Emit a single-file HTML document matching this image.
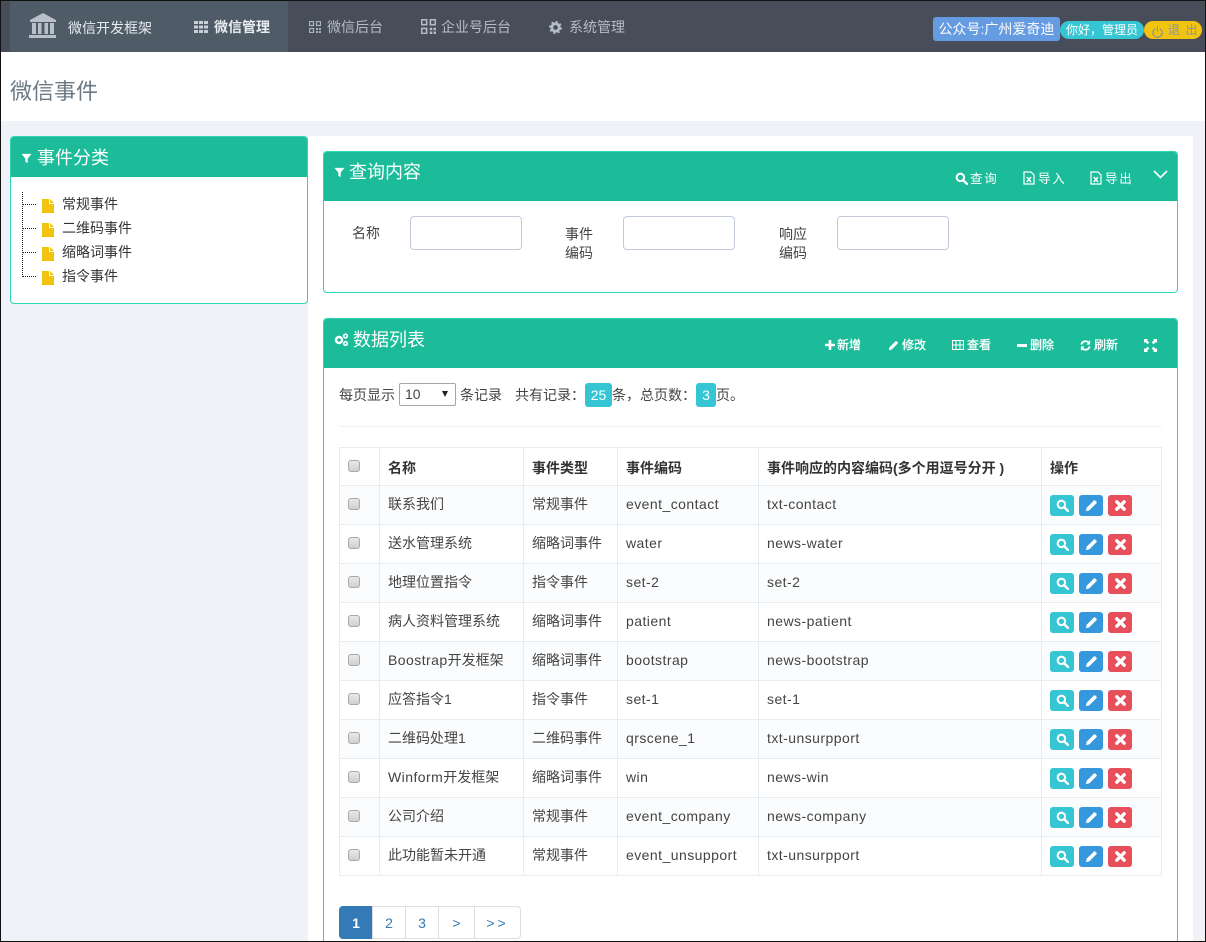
<!DOCTYPE html>
<html lang="zh"><head><meta charset="utf-8"><title>微信事件</title>
<style>
*{box-sizing:border-box}
html,body{margin:0;padding:0;width:1206px;height:942px;overflow:hidden;background:#eff3f8}
body{position:relative;font:14px "Liberation Sans","Noto Sans CJK SC",sans-serif;color:#333}
.a{position:absolute;white-space:nowrap}
.nav{color:#b4bcc8;line-height:20px;top:17px}
.wt{color:#fff}
.tb{color:#fff;font-size:12px;line-height:16px}
.bd{-webkit-text-stroke:.3px #fff}
.panel{position:absolute;background:#fff;border:1px solid #2dd5b0;border-radius:4px;overflow:hidden}
.ph{position:absolute;left:-1px;right:-1px;top:-1px;background:#1cbc9b;border-radius:4px 4px 0 0}
table{position:absolute;left:339px;top:447px;width:822px;border-collapse:collapse;table-layout:fixed;font-size:14px;color:#444}
td,th{border:1px solid #e7ecf1;padding:0 0 2px 8px;text-align:left;white-space:nowrap;height:39px;letter-spacing:.45px}
td:nth-child(2),td:nth-child(3){letter-spacing:0}
td span.l{letter-spacing:.45px}
th{height:38px;font-weight:700;color:#333;letter-spacing:0;padding:2px 0 0 8px}
th .cb{position:relative;top:-2px}
tbody tr:nth-child(odd){background:#fbfcfd}
.cb{display:block;width:12px;height:12px;border:1px solid #a9a9a9;border-radius:3px;background:linear-gradient(#e8e8e8,#d0d0d0)}
.bt{display:inline-block;width:24px;height:21px;border-radius:3px;margin-right:5px;vertical-align:middle;position:relative;top:1px}
.bt svg{display:block;margin:4px auto 0}
.c{background:#36c6d3}.b{background:#3598dc}.r{background:#e7505a}
.pg{position:absolute;top:906px;height:33px;line-height:33px;text-align:center;color:#337ab7;border:1px solid #ddd;margin-left:-1px;background:#fff;font-size:14px}
.tree{color:#333}
input{position:absolute;border:1px solid #c2cad8;border-radius:4px;background:#fff;height:34px;width:112px;top:216px;margin:0;padding:0}
</style></head><body>
<svg width="0" height="0" style="position:absolute"><defs>
<symbol id="s" viewBox="0 0 14 14"><circle cx="5.8" cy="5.8" r="4" fill="none" stroke="#fff" stroke-width="2.2"/><path d="M8.8 8.8L13 13" stroke="#fff" stroke-width="2.6" stroke-linecap="round"/></symbol>
<symbol id="p" viewBox="0 0 14 14"><path d="M1 13l.8-3.6L9.6 1.6a1 1 0 0 1 1.4 0l1.4 1.4a1 1 0 0 1 0 1.4L4.6 12.2z" fill="#fff"/></symbol>
<symbol id="x" viewBox="0 0 14 14"><path d="M3 3L11 11M11 3L3 11" stroke="#fff" stroke-width="3.6" stroke-linecap="round"/></symbol>
<symbol id="f" viewBox="0 0 12 14"><path d="M0 0H7V5H12V14H0z" fill="#f1c40f"/><path d="M8 0L12 4H8z" fill="#f1c40f"/></symbol>
<symbol id="fl" viewBox="0 0 12 12"><path d="M.5 1H11.500L7.300 6V11L4.700 9.500V6z" fill="#fff"/></symbol>
<symbol id="xl" viewBox="0 0 12 14"><path d="M1 1H8L11 4V13H1z" fill="none" stroke="#fff" stroke-width="1.200"/><path d="M3.800 6L8 11M8 6L3.800 11" stroke="#fff" stroke-width="1.400"/></symbol>
<symbol id="qr" viewBox="0 0 12 12"><path d="M.5.500H4.500V4.500H.5zM7.500.5H11.500V4.500H7.500zM.5 7.500H4.500V11.500H.5z" fill="none" stroke="currentColor" stroke-width="1.300"/><path d="M7 7H9V9H7zM10 7H12V9H10zM7 10H9V12H7zM10 10H12V12H10z" fill="currentColor"/></symbol>
</defs></svg>

<!-- top nav -->
<div class="a" style="left:0;top:0;width:1206px;height:52px;background:#474d59"></div>
<div class="a" style="left:10px;top:1px;width:164px;height:52px;background:#4f5b66"></div>
<div class="a" style="left:174px;top:1px;width:114px;height:51px;background:#4f5b66"></div>
<svg class="a" style="left:28px;top:13px" width="30" height="26" viewBox="0 0 30 26"><path d="M15 0L28 7V9H2V7z" fill="#b9c0ca"/><path d="M4 10H8V21H4zM10 10H13.500V21H10zM16.500 10H20V21H16.500zM22 10H26V21H22z" fill="#b9c0ca"/><path d="M2 22H28V25H1V22z" fill="#b9c0ca"/></svg>
<div class="a nav" style="left:68px;top:18px;color:#e8edf2">微信开发框架</div>
<svg class="a" style="left:194px;top:21px" width="14" height="12" viewBox="0 0 14 12"><path d="M0 0H4V3H0zM5 0H9V3H5zM10 0H14V3H10zM0 4.500H4V7.500H0zM5 4.500H9V7.500H5zM10 4.500H14V7.500H10zM0 9H4V12H0zM5 9H9V12H5zM10 9H14V12H10z" fill="#c9d0d8"/></svg>
<div class="a nav" style="left:214px;color:#e8edf2;font-weight:700">微信管理</div>
<svg class="a" style="left:309px;top:21px;color:#a5b3c4" width="12" height="12"><use href="#qr"/></svg>
<div class="a nav" style="left:327px">微信后台</div>
<svg class="a" style="left:421px;top:19px;color:#b4bcc8" width="15" height="15" viewBox="0 0 12 12"><use href="#qr"/></svg>
<div class="a nav" style="left:441px">企业号后台</div>
<svg class="a" style="left:549px;top:21px" width="13" height="13" viewBox="0 0 14 14"><circle cx="7" cy="7" r="4" fill="none" stroke="#b4bcc8" stroke-width="3"/><circle cx="7" cy="7" r="6" fill="none" stroke="#b4bcc8" stroke-width="2" stroke-dasharray="2.300 2.400"/></svg>
<div class="a nav" style="left:569px">系统管理</div>
<div class="a" style="left:933px;top:17px;width:127px;height:24px;background:#659be0;border-radius:3px;color:#fff;font-size:14px;line-height:24px;text-align:center">公众号:广州爱奇迪</div>
<div class="a" style="left:1060px;top:21px;width:84px;height:18px;background:#36c6d3;border-radius:9px;color:#fff;font-size:12px;line-height:18px;text-align:center">你好，管理员</div>
<div class="a" style="left:1144px;top:21px;width:58px;height:18px;background:#f1c40f;border-radius:9px;color:#8c93a0;font-size:12px;line-height:19px;padding-left:24px;letter-spacing:1px">退 出</div>
<svg class="a" style="left:1152px;top:26px" width="11" height="12" viewBox="0 0 12 13"><path d="M3.500 3A5 5 0 1 0 8.500 3M6 .5V6" fill="none" stroke="#7f8fa3" stroke-width="1.200"/></svg>

<!-- page head -->
<div class="a" style="left:0;top:52px;width:1206px;height:69px;background:#fff"></div>
<div class="a" style="left:10px;top:76px;font-size:22px;line-height:32px;color:#6c7a84">微信事件</div>

<!-- content bg -->
<div class="a" style="left:308px;top:136px;width:885px;height:806px;background:#fff"></div>

<!-- left panel -->
<div class="panel" style="left:10px;top:136px;width:298px;height:168px"><div class="ph" style="height:41px"></div></div>
<svg class="a" style="left:21px;top:153px" width="11" height="11"><use href="#fl"/></svg>
<div class="a wt" style="left:37px;top:146px;font-size:18px;line-height:24px">事件分类</div>
<div class="a" style="left:22px;top:192px;height:85px;border-left:1px dotted #222"></div>
<div class="a" style="left:23px;top:204px;width:13px;border-top:1px dotted #222"></div>
<div class="a" style="left:23px;top:228px;width:13px;border-top:1px dotted #222"></div>
<div class="a" style="left:23px;top:252px;width:13px;border-top:1px dotted #222"></div>
<div class="a" style="left:23px;top:276px;width:13px;border-top:1px dotted #222"></div>
<svg class="a" style="left:42px;top:199px" width="12" height="14"><use href="#f"/></svg>
<svg class="a" style="left:42px;top:223px" width="12" height="14"><use href="#f"/></svg>
<svg class="a" style="left:42px;top:247px" width="12" height="14"><use href="#f"/></svg>
<svg class="a" style="left:42px;top:271px" width="12" height="14"><use href="#f"/></svg>
<div class="a tree" style="left:62px;top:194px;line-height:20px">常规事件</div>
<div class="a tree" style="left:62px;top:218px;line-height:20px">二维码事件</div>
<div class="a tree" style="left:62px;top:242px;line-height:20px">缩略词事件</div>
<div class="a tree" style="left:62px;top:266px;line-height:20px">指令事件</div>

<!-- query panel -->
<div class="panel" style="left:323px;top:151px;width:855px;height:142px"><div class="ph" style="height:50px"></div></div>
<svg class="a" style="left:334px;top:167px" width="11" height="11"><use href="#fl"/></svg>
<div class="a wt" style="left:349px;top:160px;font-size:18px;line-height:24px">查询内容</div>
<svg class="a" style="left:955px;top:172px" width="13" height="13"><use href="#s"/></svg>
<div class="a tb" style="left:970px;top:171px;font-size:12.500px;letter-spacing:1.800px">查询</div>
<svg class="a" style="left:1023px;top:171px" width="12" height="14"><use href="#xl"/></svg>
<div class="a tb" style="left:1038px;top:171px;font-size:12.500px;letter-spacing:1.800px">导入</div>
<svg class="a" style="left:1090px;top:171px" width="12" height="14"><use href="#xl"/></svg>
<div class="a tb" style="left:1105px;top:171px;font-size:12.500px;letter-spacing:1.800px">导出</div>
<svg class="a" style="left:1153px;top:170px" width="15" height="9" viewBox="0 0 15 9"><path d="M1 1L7.500 7.500L14 1" fill="none" stroke="#fff" stroke-width="1.600"/></svg>
<div class="a" style="left:352px;top:223px;line-height:20px;color:#444">名称</div>
<input style="left:410px"><input style="left:623px"><input style="left:837px">
<div class="a" style="left:565px;top:225px;line-height:19px;color:#444">事件<br>编码</div>
<div class="a" style="left:779px;top:225px;line-height:19px;color:#444">响应<br>编码</div>

<!-- data panel -->
<div class="panel" style="left:323px;top:318px;width:855px;height:640px"><div class="ph" style="height:50px"></div></div>
<svg class="a" style="left:334px;top:333px" width="15" height="13" viewBox="0 0 15 13"><circle cx="5" cy="7" r="3" fill="none" stroke="#fff" stroke-width="2.400"/><circle cx="11.500" cy="3" r="1.800" fill="none" stroke="#fff" stroke-width="1.600"/><circle cx="11.500" cy="10.500" r="1.800" fill="none" stroke="#fff" stroke-width="1.600"/></svg>
<div class="a wt" style="left:353px;top:328px;font-size:18px;line-height:24px">数据列表</div>
<svg class="a" style="left:825px;top:340px" width="10" height="10" viewBox="0 0 10 10"><path d="M3.700 0H6.300V3.700H10V6.300H6.300V10H3.700V6.300H0V3.700H3.700z" fill="#fff"/></svg>
<div class="a tb bd" style="left:837px;top:337px">新增</div>
<svg class="a" style="left:888px;top:340px" width="11" height="11"><use href="#p"/></svg>
<div class="a tb bd" style="left:902px;top:337px">修改</div>
<svg class="a" style="left:952px;top:340px" width="12" height="10" viewBox="0 0 12 10"><path d="M.5.500H11.500V9.500H.5zM4 .5V9.500M8 .5V9.500M.5 5H11.500" fill="none" stroke="#fff"/></svg>
<div class="a tb bd" style="left:967px;top:337px">查看</div>
<div class="a" style="left:1017px;top:344px;width:10px;height:3px;background:#fff"></div>
<div class="a tb bd" style="left:1030px;top:337px">删除</div>
<svg class="a" style="left:1080px;top:340px" width="11" height="11" viewBox="0 0 12 12"><path d="M1.500 5A4.700 4.700 0 0 1 10 3.500M10.500 7A4.700 4.700 0 0 1 2 8.500" fill="none" stroke="#fff" stroke-width="2"/><path d="M11 0V5H7.200zM1 12V7H4.800z" fill="#fff"/></svg>
<div class="a tb bd" style="left:1094px;top:337px">刷新</div>
<svg class="a" style="left:1144px;top:339px" width="13" height="13" viewBox="0 0 13 13"><path d="M0 0H4L2.900 1.100L5.300 3.500L3.500 5.300L1.100 2.900L0 4zM13 0V4L11.900 2.900L9.500 5.300L7.700 3.500L10.100 1.100L9 0zM0 13V9L1.100 10.100L3.500 7.700L5.300 9.500L2.900 11.900L4 13zM13 13H9L10.100 11.900L7.700 9.500L9.500 7.700L11.900 10.100L13 9z" fill="#fff"/></svg>

<div class="a" style="left:339px;top:385px;line-height:20px;color:#444">每页显示</div>
<div class="a" style="left:399px;top:383px;width:57px;height:23px;border:1px solid #a6a6a6;border-radius:2px;background:#fff;line-height:21px;padding-left:5px;color:#444">10</div>
<div class="a" style="left:442px;top:391px;width:0;height:0;border-left:3.500px solid transparent;border-right:3.500px solid transparent;border-top:6px solid #222"></div>
<div class="a" style="left:460px;top:385px;line-height:20px;color:#444">条记录</div>
<div class="a" style="left:515px;top:385px;line-height:20px;color:#444">共有记录：</div>
<div class="a" style="left:585px;top:383px;width:27px;height:24px;background:#36c6d3;border-radius:3px;color:#fff;text-align:center;line-height:24px">25</div>
<div class="a" style="left:612px;top:385px;line-height:20px;color:#444">条，总页数：</div>
<div class="a" style="left:696px;top:383px;width:20px;height:24px;background:#36c6d3;border-radius:3px;color:#fff;text-align:center;line-height:24px">3</div>
<div class="a" style="left:716px;top:385px;line-height:20px;color:#444">页。</div>
<div class="a" style="left:339px;top:426px;width:823px;height:1px;background:#eef1f5"></div>

<table><colgroup><col style="width:40px"><col style="width:144px"><col style="width:94px"><col style="width:141px"><col style="width:283px"><col style="width:120px"></colgroup>
<thead><tr><th><i class="cb"></i></th><th>名称</th><th>事件类型</th><th>事件编码</th><th>事件响应的内容编码(多个用逗号分开 )</th><th>操作</th></tr></thead>
<tbody>
<tr><td><i class="cb"></i></td><td>联系我们</td><td>常规事件</td><td>event_contact</td><td>txt-contact</td><td><span class="bt c"><svg width="13" height="13"><use href="#s"/></svg></span><span class="bt b"><svg width="13" height="13"><use href="#p"/></svg></span><span class="bt r"><svg width="13" height="13"><use href="#x"/></svg></span></td></tr>
<tr><td><i class="cb"></i></td><td>送水管理系统</td><td>缩略词事件</td><td>water</td><td>news-water</td><td><span class="bt c"><svg width="13" height="13"><use href="#s"/></svg></span><span class="bt b"><svg width="13" height="13"><use href="#p"/></svg></span><span class="bt r"><svg width="13" height="13"><use href="#x"/></svg></span></td></tr>
<tr><td><i class="cb"></i></td><td>地理位置指令</td><td>指令事件</td><td>set-2</td><td>set-2</td><td><span class="bt c"><svg width="13" height="13"><use href="#s"/></svg></span><span class="bt b"><svg width="13" height="13"><use href="#p"/></svg></span><span class="bt r"><svg width="13" height="13"><use href="#x"/></svg></span></td></tr>
<tr><td><i class="cb"></i></td><td>病人资料管理系统</td><td>缩略词事件</td><td>patient</td><td>news-patient</td><td><span class="bt c"><svg width="13" height="13"><use href="#s"/></svg></span><span class="bt b"><svg width="13" height="13"><use href="#p"/></svg></span><span class="bt r"><svg width="13" height="13"><use href="#x"/></svg></span></td></tr>
<tr><td><i class="cb"></i></td><td><span class="l">Boostrap</span>开发框架</td><td>缩略词事件</td><td>bootstrap</td><td>news-bootstrap</td><td><span class="bt c"><svg width="13" height="13"><use href="#s"/></svg></span><span class="bt b"><svg width="13" height="13"><use href="#p"/></svg></span><span class="bt r"><svg width="13" height="13"><use href="#x"/></svg></span></td></tr>
<tr><td><i class="cb"></i></td><td>应答指令1</td><td>指令事件</td><td>set-1</td><td>set-1</td><td><span class="bt c"><svg width="13" height="13"><use href="#s"/></svg></span><span class="bt b"><svg width="13" height="13"><use href="#p"/></svg></span><span class="bt r"><svg width="13" height="13"><use href="#x"/></svg></span></td></tr>
<tr><td><i class="cb"></i></td><td>二维码处理1</td><td>二维码事件</td><td>qrscene_1</td><td>txt-unsurpport</td><td><span class="bt c"><svg width="13" height="13"><use href="#s"/></svg></span><span class="bt b"><svg width="13" height="13"><use href="#p"/></svg></span><span class="bt r"><svg width="13" height="13"><use href="#x"/></svg></span></td></tr>
<tr><td><i class="cb"></i></td><td><span class="l">Winform</span>开发框架</td><td>缩略词事件</td><td>win</td><td>news-win</td><td><span class="bt c"><svg width="13" height="13"><use href="#s"/></svg></span><span class="bt b"><svg width="13" height="13"><use href="#p"/></svg></span><span class="bt r"><svg width="13" height="13"><use href="#x"/></svg></span></td></tr>
<tr><td><i class="cb"></i></td><td>公司介绍</td><td>常规事件</td><td>event_company</td><td>news-company</td><td><span class="bt c"><svg width="13" height="13"><use href="#s"/></svg></span><span class="bt b"><svg width="13" height="13"><use href="#p"/></svg></span><span class="bt r"><svg width="13" height="13"><use href="#x"/></svg></span></td></tr>
<tr><td><i class="cb"></i></td><td>此功能暂未开通</td><td>常规事件</td><td>event_unsupport</td><td>txt-unsurpport</td><td><span class="bt c"><svg width="13" height="13"><use href="#s"/></svg></span><span class="bt b"><svg width="13" height="13"><use href="#p"/></svg></span><span class="bt r"><svg width="13" height="13"><use href="#x"/></svg></span></td></tr>
</tbody></table>

<div class="pg" style="left:340px;width:34px;background:#337ab7;border-color:#337ab7;color:#fff;border-radius:4px 0 0 4px;font-weight:700">1</div>
<div class="pg" style="left:373px;width:34px">2</div>
<div class="pg" style="left:406px;width:34px">3</div>
<div class="pg" style="left:439px;width:37px">&gt;</div>
<div class="pg" style="left:475px;width:47px;border-radius:0 4px 4px 0;letter-spacing:3px">&gt;&gt;</div>

<!-- outer frame -->
<div class="a" style="left:0;top:0;width:1206px;height:942px;border:1px solid #111;pointer-events:none"></div>
</body></html>
